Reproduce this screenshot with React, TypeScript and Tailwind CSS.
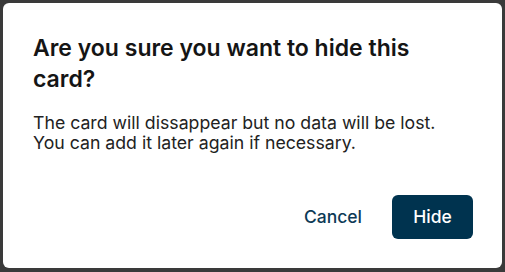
import React from "react";

export default function App() {
  return (
    <div className="w-[505px] h-[272px] bg-[#3a3a3a] pt-[3px] pl-[3px] pr-[3px] pb-[4px]" style={{ fontFamily: "Inter, 'Noto Sans', sans-serif" }}>
      <div className="h-full bg-white rounded-[6px] pl-[30px] pr-[29px] pt-[30px] pb-[29px] flex flex-col">
        <h2 className="text-[23px] leading-[31px] font-semibold text-[#151515]">
          Are you sure you want to hide this card?
        </h2>
        <p className="mt-[18px] text-[17.7px] leading-[20px] text-[#222]">
          The card will dissappear but no data will be lost.
          <br />
          You can add it later again if necessary.
        </p>
        <div className="mt-auto flex items-center justify-end gap-[15px]">
          <button className="h-[44px] px-[15px] text-[17.5px] font-medium text-[#0d3a56]">Cancel</button>
          <button className="h-[44px] w-[81px] rounded-[6px] bg-[#00334f] text-[17.5px] font-medium text-white">
            Hide
          </button>
        </div>
      </div>
    </div>
  );
}
